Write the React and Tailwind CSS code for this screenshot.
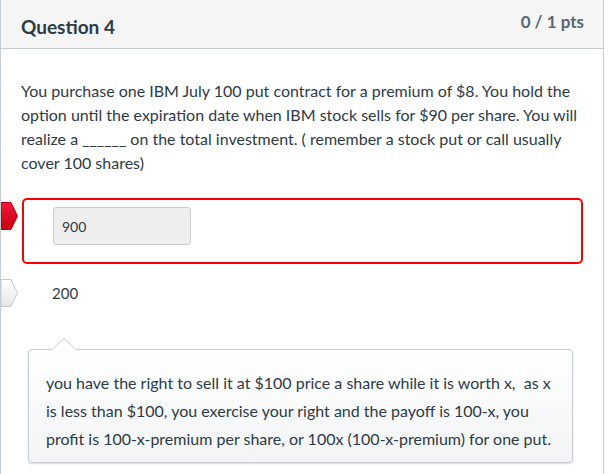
const Marker = ({ wrong, top }) => (
    <svg width="18" height="28" viewBox="0 0 18 28" className={`absolute left-0 ${top}`}>
        <defs>
            <linearGradient id={wrong ? 'mw' : 'mn'} x1="0" y1="0" x2="0" y2="1">
                <stop offset="0" stopColor={wrong ? '#f0193a' : '#ffffff'} />
                <stop offset="1" stopColor={wrong ? '#c4000f' : '#e6e6e6'} />
            </linearGradient>
        </defs>
        <path
            d="M0 0.5 H10 L16.5 14 L10 27.5 H0 Z"
            fill={`url(#${wrong ? 'mw' : 'mn'})`}
            stroke={wrong ? '#b00010' : '#c8c8c8'}
            strokeWidth="1"
        />
    </svg>
);

const App = () => {
    return (
        <div className="w-[610px] h-[474px] bg-white overflow-hidden" style={{ fontFamily: 'Lato, "Open Sans", sans-serif' }}>
            <div className="w-[604px] h-[474px] border-x border-[#c7cdd1] text-[#2d3b45]">
                <div className="h-[49px] bg-[#f5f5f5] border-b border-[#c7cdd1] flex items-start justify-between pl-[20px] pr-[19px]">
                    <h2 className="text-[19px] font-bold mt-[15px] leading-[24px]">Question 4</h2>
                    <span className="text-[17px] font-bold text-[#5b6670] mt-[11px] leading-[22px]">0 / 1 pts</span>
                </div>

                <div className="pt-[30px] pl-[20px] pr-[22px] text-[16px] leading-[24px]">
                    <p>
                        You purchase one IBM July 100 put contract for a premium of $8. You hold the option until the
                        expiration date when IBM stock sells for $90 per share. You will realize a ______ on the total
                        investment. ( remember a stock put or call usually cover 100 shares)
                    </p>
                </div>

                <div className="relative mt-[23px]">
                    <Marker wrong top="top-[4px]" />
                    <div className="ml-[21px] mr-[20px] h-[66px] border-2 border-[#ff0000] rounded-[5px] flex items-start pl-[29px] pt-[7px]">
                        <div className="w-[138px] h-[38px] bg-[#eeeeee] border border-[#cccccc] rounded-[3px] flex items-center pl-[8px] text-[14px]">
                            900
                        </div>
                    </div>
                </div>

                <div className="relative h-[28px] mt-[15px]">
                    <Marker top="top-[0px]" />
                    <div className="pl-[51px] leading-[28px] text-[15px]">200</div>
                </div>

                <div className="relative mt-[42px] ml-[27px] mr-[30px]">
                    <svg width="24" height="12" viewBox="0 0 24 12" className="absolute -top-[11px] left-[24px]">
                        <path d="M0 11.5 L12 0.5 L24 11.5" fill="#ffffff" stroke="#c7cdd1" strokeWidth="1" />
                        <rect x="0" y="11" width="24" height="2" fill="#ffffff" />
                    </svg>
                    <div className="border border-[#c7cdd1] rounded-[4px] bg-gradient-to-b from-white to-[#f2f4f5] shadow-[0_1px_2px_rgba(0,0,0,0.15)] pt-[19px] pb-[9px] pl-[17px] pr-[14px] text-[16px] leading-[28px]">
                        you have the right to sell it at $100 price a share while it is worth x,&nbsp; as x is less than $100,
                        you exercise your right and the payoff is 100-x, you profit is 100-x-premium per share, or 100x
                        (100-x-premium) for one put.
                    </div>
                </div>
            </div>
        </div>
    );
};

export default App;
